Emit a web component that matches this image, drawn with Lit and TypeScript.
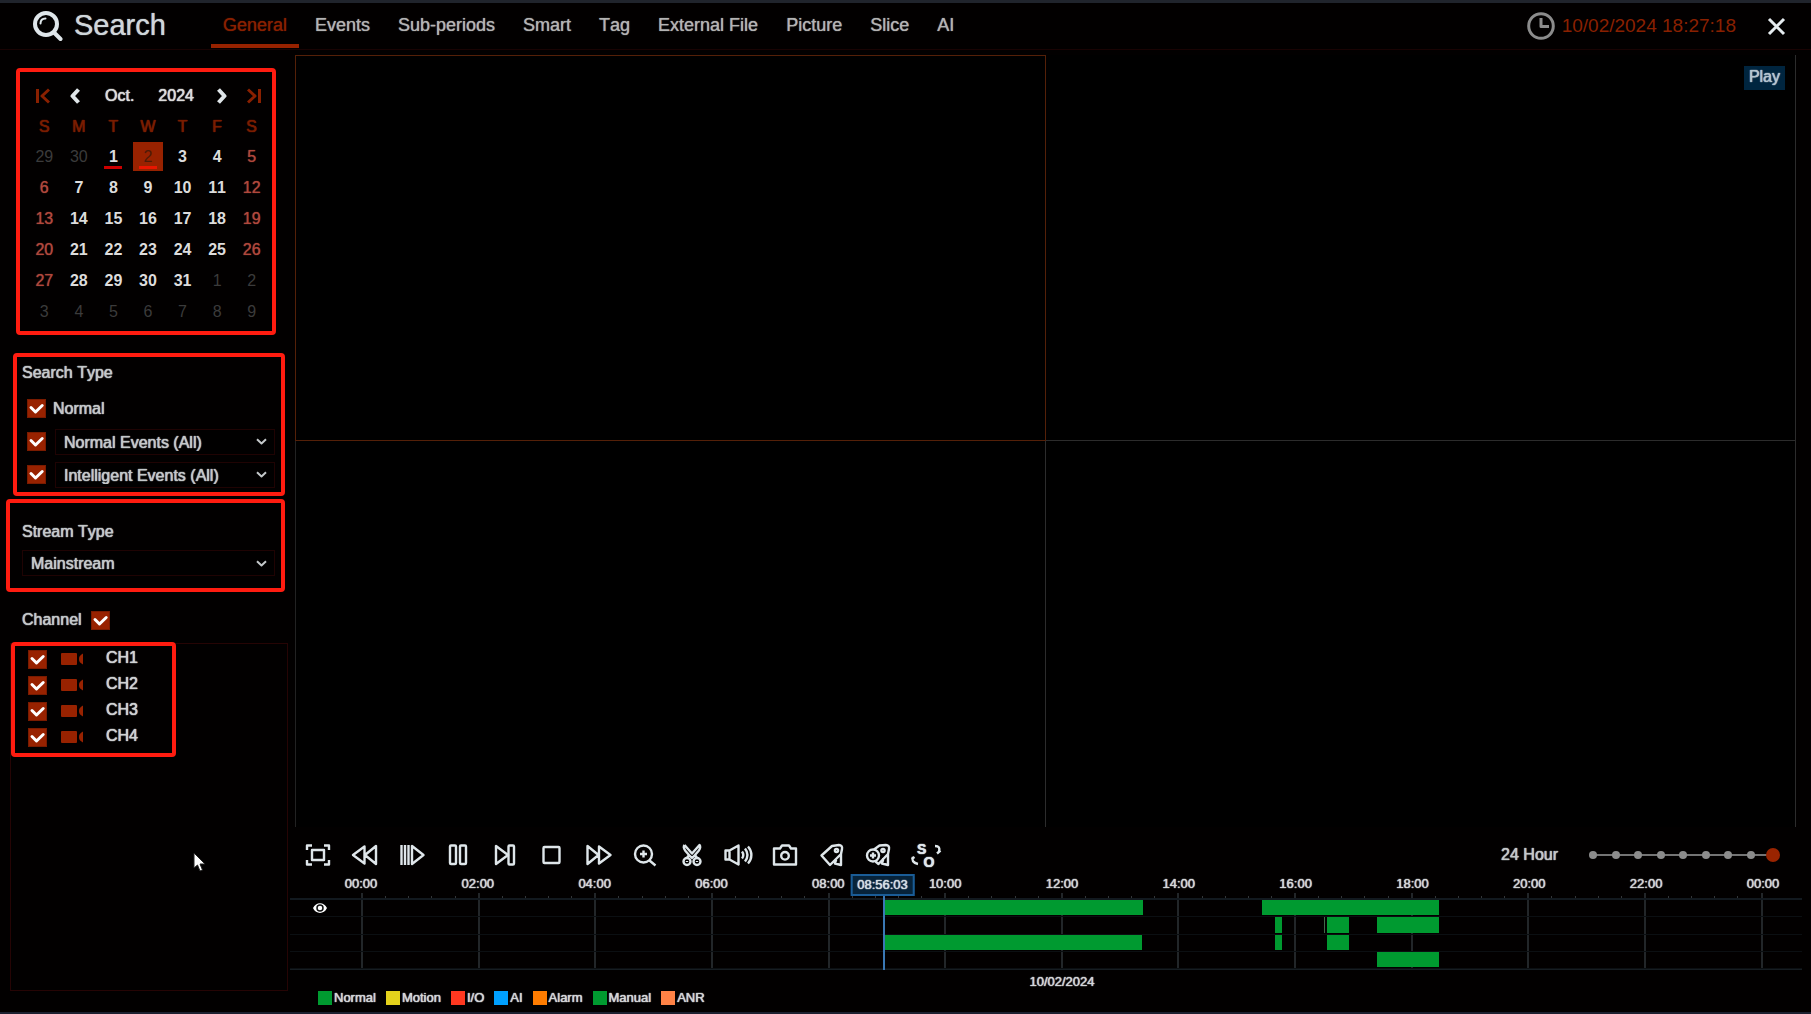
import { LitElement, html, svg, css, type SVGTemplateResult } from "lit";
import { customElement, property, state } from "lit/decorators.js";
import { classMap } from "lit/directives/class-map.js";

const baseStyles = css`
  *, *::before, *::after { box-sizing: border-box; }
  button, select, input { font: inherit; font-kerning: inherit; color: inherit; margin: 0; }
  button {
    background: none; border: 0; padding: 0; text-shadow: inherit;
    display: inline-flex; align-items: center; justify-content: center; cursor: pointer;
  }
  svg { display: block; fill: none; stroke: currentColor; stroke-width: 2; stroke-linejoin: round; }
`;

const frameStyles = css`
  .frame { border: 4px solid #ff1c10; border-radius: 4px; }
`;

@customElement("check-box")
export class CheckBox extends LitElement {
  @property() label = "";
  @property({ type: Boolean }) checked = true;

  static styles = [baseStyles, css`
    :host { display: inline-flex; }
    .box { display: grid; }
    .input, .mark { grid-area: 1 / 1; width: 19px; height: 19px; }
    .input { appearance: none; background: #982200; border: 1px solid #7a1b00; cursor: pointer; }
    .mark { color: #fff; stroke-width: 3; pointer-events: none; stroke-linecap: round; }
    .input:not(:checked) + .mark { display: none; }
  `];

  render() {
    return html`
      <span class="box">
        <input class="input" type="checkbox" aria-label=${this.label} .checked=${this.checked} />
        <svg class="mark" viewBox="0 0 19 19"><path d="M4 8.500 8.500 13 15.200 6.500" /></svg>
      </span>`;
  }
}

@customElement("drop-down")
export class DropDown extends LitElement {
  @property() label = "";
  @property() value = "";

  static styles = [baseStyles, css`
    :host { display: block; flex: 1; }
    .wrap { display: grid; grid-template-columns: 1fr 11px 8px; align-items: center; }
    .select {
      grid-area: 1 / 1 / 2 / 4; appearance: none; width: 100%; height: 26px; padding: 1px 8px 0;
      background: #010000; border: 1px solid #1f0303; color: #c4c8ca; text-shadow: inherit;
    }
    .arrow { grid-area: 1 / 2; width: 11px; height: 7px; pointer-events: none; color: #c4c8ca; }
  `];

  render() {
    return html`
      <div class="wrap">
        <select class="select" aria-label=${this.label}><option>${this.value}</option></select>
        <svg class="arrow" viewBox="0 0 11 7"><path d="M1 1.200 5.500 5.400 10 1.200" /></svg>
      </div>`;
  }
}

@customElement("date-picker")
export class DatePicker extends LitElement {
  @state() private selected = 2;

  static styles = [baseStyles, frameStyles, css`
    :host { display: block; }
    .calendar { padding: 6px 3px 4px 7px; }
    .head { display: flex; align-items: center; gap: 20px; height: 35px; padding-left: 9px; }
    .period { display: flex; gap: 24px; margin: 0 3px 0 5px; }
    .jump { color: #8a2000; stroke-width: 3; }
    .jump svg { stroke-width: 3; }
    .step { color: #dfe5e8; }
    .step svg { stroke-width: 4; }
    .grid { width: 100%; table-layout: fixed; border-collapse: collapse; }
    .weekday { height: 28px; padding: 0; font-weight: 400; color: #7a1d00; }
    .cell { height: 31px; padding: 0; text-align: center; }
    .day { width: 30px; height: 29px; position: relative; vertical-align: middle; font-weight: 700; text-shadow: none; }
    .outside { color: #3b3b3b; font-weight: 400; }
    .weekend { color: #b0483c; font-weight: 400; text-shadow: 0 0 1px currentColor; }
    .selected { background: #982200; color: #4d1a08; font-weight: 400; }
    .marked::after {
      content: ""; position: absolute; left: 6px; right: 6px; bottom: 2px; height: 3px; background: #cc0000;
    }
    .selected::after { background: #e81600; }
  `];

  private renderDay(index: number) {
    const value = index - 1;
    const outside = value < 1 || value > 31;
    const shown = value < 1 ? 30 + value : value > 31 ? value - 31 : value;
    const column = index % 7;
    const classes = {
      day: true,
      outside,
      weekend: !outside && (column === 0 || column === 6),
      selected: value === this.selected,
      marked: value === 1 || value === 2,
    };
    return html`<td class="cell">
      <button class=${classMap(classes)} @click=${() => { if (!outside) this.selected = value; }}>${shown}</button>
    </td>`;
  }

  render() {
    return html`
      <section class="frame calendar">
        <div class="head">
          <button class="jump" aria-label="First"><svg width="14" height="16" viewBox="0 0 14 16"><path d="M1.500 1v14M13 1.500 6 8l7 6.500" /></svg></button>
          <button class="step" aria-label="Previous month"><svg width="10" height="16" viewBox="0 0 10 16"><path d="M8.500 1.500 2.500 8l6 6.500" /></svg></button>
          <div class="period"><span>Oct.</span><span>2024</span></div>
          <button class="step" aria-label="Next month"><svg width="10" height="16" viewBox="0 0 10 16"><path d="M1.500 1.500 7.500 8l-6 6.500" /></svg></button>
          <button class="jump" aria-label="Last"><svg width="14" height="16" viewBox="0 0 14 16"><path d="M12.500 1v14M1 1.500 8 8l-7 6.500" /></svg></button>
        </div>
        <table class="grid">
          <thead><tr>${["S", "M", "T", "W", "T", "F", "S"].map((d) => html`<th class="weekday">${d}</th>`)}</tr></thead>
          <tbody>
            ${[0, 1, 2, 3, 4, 5].map((week) => html`<tr>${[0, 1, 2, 3, 4, 5, 6].map((d) => this.renderDay(week * 7 + d))}</tr>`)}
          </tbody>
        </table>
      </section>`;
  }
}

@customElement("search-sidebar")
export class SearchSidebar extends LitElement {
  static styles = [baseStyles, frameStyles, css`
    :host { display: flex; flex-direction: column; padding: 18px 0 21px; color: #c4c8ca; }
    .picker { width: 260px; margin-left: 16px; color: #dcdcdc; }
    .search { width: 272px; margin: 18px 0 0 13px; padding: 6px 6px 1px 5px; }
    .stream { width: 279px; margin: 3px 0 0 6px; padding: 19px 6px 12px 12px; }
    .title { font: inherit; font-kerning: inherit; margin: 0; line-height: 20px; }
    .row { display: flex; align-items: center; gap: 9px; height: 33px; padding-left: 5px; }
    .plain { gap: 7px; height: 31px; margin: 10px 0 1px; line-height: 16px; }
    .stream .title { margin-bottom: 8px; }
    .channel { display: flex; align-items: center; gap: 9px; height: 20px; margin: 18px 0 13px 22px; }
    .list { flex: 1; width: 278px; margin-left: 10px; border: 1px solid #260404; }
    .channels { width: 165px; margin: -2px 0 0; padding: 0 0 3px 13px; list-style: none; }
    .item { display: flex; align-items: center; height: 26px; }
    .camera { margin-left: 14px; fill: #982200; stroke: none; }
    .name { margin-left: 23px; line-height: 20px; margin-bottom: 3px; color: #d0d2d4; }
  `];

  render() {
    return html`
      <date-picker class="picker"></date-picker>
      <section class="frame search">
        <h2 class="title">Search Type</h2>
        <div class="row plain"><check-box label="Normal"></check-box><span>Normal</span></div>
        <div class="row"><check-box label="Normal Events"></check-box><drop-down label="Normal Events" value="Normal Events (All)"></drop-down></div>
        <div class="row"><check-box label="Intelligent Events"></check-box><drop-down label="Intelligent Events" value="Intelligent Events (All)"></drop-down></div>
      </section>
      <section class="frame stream">
        <h2 class="title">Stream Type</h2>
        <drop-down label="Stream Type" value="Mainstream"></drop-down>
      </section>
      <div class="channel"><h2 class="title">Channel</h2><check-box label="All channels"></check-box></div>
      <div class="list">
        <ul class="frame channels">
          ${["CH1", "CH2", "CH3", "CH4"].map((name) => html`
            <li class="item">
              <check-box label=${name}></check-box>
              <svg class="camera" width="22" height="14" viewBox="0 0 22 14"><rect y="1" width="16" height="12" rx="1" /><path d="M22 1.500v11C19 11 18 9.500 18 7s1-4 4-5.500z" /></svg>
              <span class="name">${name}</span>
            </li>`)}
        </ul>
      </div>`;
  }
}

const controls: { label: string; icon: SVGTemplateResult }[] = [
  { label: "Full screen", icon: svg`<path d="M4 9V4.500h5M21 4.500h5V9M26 19v4.500h-5M9 23.500H4V19"/><rect x="9" y="9" width="12" height="10"/>` },
  { label: "Rewind", icon: svg`<path d="M14.500 5.500 3 14l11.500 8.500zM26 5v18L15 14z"/>` },
  { label: "Slow play", icon: svg`<path d="M4.500 4v20M8 4v20M11.500 4v20"/><path d="M15 5v18l11.500-9z"/>` },
  { label: "Pause", icon: svg`<rect x="7" y="4.500" width="6" height="18.500" rx="1"/><rect x="17" y="4.500" width="6" height="18.500" rx="1"/>` },
  { label: "Next frame", icon: svg`<path d="M6 5v18l12-9z"/><rect x="18.500" y="4.500" width="5.500" height="19" rx="1"/>` },
  { label: "Stop", icon: svg`<rect x="6.500" y="6" width="16" height="16" rx="1"/>` },
  { label: "Fast forward", icon: svg`<path d="M3.500 5v18l11-9zM15 5.500 26.500 14 15 22.500z"/>` },
  { label: "Zoom in", icon: svg`<circle cx="13.500" cy="13" r="8.500"/><path d="m19.500 19.500 6 5M13.500 9.500v7M10 13h7"/>` },
  { label: "Clip", icon: svg`<path d="M7.500 4c-1.500 2-.5 4 1 6l3.500 4-2 3M7.500 4l7.500 8.500L22.500 4c1.500 2 .5 4-1 6L18 14l2 3M12 14l3 3 3-3"/><circle cx="10" cy="20.500" r="3.500"/><circle cx="20" cy="20.500" r="3.500"/><path d="M10 20v1M20 20v1"/>` },
  { label: "Volume", icon: svg`<path d="M5.500 9.500H1.500v9h4M5.500 9.500v9l9 5V4.500zM18 10.500c1.500 2 1.500 5 0 7M21 7.500c3 4 3 9 0 13M24 5.500c4.500 5 4.500 12 0 17"/>` },
  { label: "Snapshot", icon: svg`<path d="M4 7.500h6l2-3h7l2 3h5v16H4z"/><circle cx="15" cy="14.800" r="3.800"/>` },
  { label: "Tag", icon: svg`<path d="M4.500 14.500 15 5l7-1c2 0 3.500 1.500 3 4l-1 5L13 24zM19.500 17.500l-1.500 5 6 1.500v-11"/><circle cx="19.500" cy="9.500" r="1.600"/>` },
  { label: "Add tag", icon: svg`<circle cx="9" cy="14.500" r="6"/><path d="M9 11.500v6M6 14.500h6M10 8.500 15.500 4.500 22 4c2 0 3.500 1.500 3 4l-1 5-9.500 10-3-2.500M19.500 17.500l-1.500 5 6 1.500v-11"/><circle cx="19" cy="9.500" r="1.600"/>` },
  { label: "Synchronise", icon: svg`<g class="letters"><text x="6" y="13">S</text><text x="12.500" y="26">O</text></g><path d="M24 5c4 0 5 2 4 5.500M29.500 9.500l-3.500 3M2 16c-1.500 3 0 6 5 7M.5 18l3-2" />` },
];

interface Clip { start: number; end: number; faint?: boolean; }

const tracks: Clip[][] = [
  [{ start: 8.934, end: 13.38 }, { start: 15.41, end: 18.45 }],
  [{ start: 15.64, end: 15.76 }, { start: 16.48, end: 16.5, faint: true }, { start: 16.53, end: 16.91 }, { start: 17.39, end: 18.45 }],
  [{ start: 8.934, end: 13.36 }, { start: 15.64, end: 15.76 }, { start: 16.53, end: 16.91 }],
  [{ start: 17.39, end: 18.45 }],
];

const legend = [
  ["Normal", "#009a30"], ["Motion", "#e4d11c"], ["I/O", "#ff3820"], ["AI", "#00a0ff"],
  ["Alarm", "#ff7c00"], ["Manual", "#009a30"], ["ANR", "#ff8246"],
];

const percent = (hour: number) => (hour / 24) * 100;

@customElement("time-line")
export class TimeLine extends LitElement {
  @property({ type: Number }) position = 8.934;

  static styles = [baseStyles, css`
    :host { display: block; font-size: 13px; line-height: 16px; color: #d4d6d8; }
    .chart { position: relative; margin-right: 9px; }
    .labels, .ticks { display: flex; justify-content: space-between; margin: 0 39px 0 71px; }
    .labels { height: 17px; }
    .label { width: 0; display: flex; justify-content: center; }
    .ticks { height: 77px; }
    .tick { width: 1px; height: 3px; margin-top: 3px; background: #33373a; }
    .major { width: 2px; height: 77px; margin: 0; background: #222629; }
    .tracks { position: absolute; inset: 22px 0 0; border-top: 2px solid #12191f; border-bottom: 1px solid #161d22; display: grid; grid-template-rows: repeat(4, 1fr); }
    .track { padding-right: 39px; border-bottom: 1px solid #0b0f12; display: grid; grid-template-columns: 72px 1fr; }
    .eye { align-self: center; justify-self: start; margin-left: 22px; color: #fff; }
    .lane { position: relative; grid-column: 2; }
    .clip { position: absolute; top: 0; bottom: 1px; background: #009a30; }
    .faint { background: #3f6b4a; }
    .playhead { position: absolute; inset: 0 40px 0 71px; pointer-events: none; }
    .line { position: absolute; top: 19px; bottom: 0; width: 2px; background: #3a78b4; }
    .time {
      position: absolute; top: -2px; transform: translateX(-50%); height: 22px; padding: 1px 5px;
      background: #07233a; border: 2px solid #1a5c96; color: #d4dde4;
    }
    .date { text-align: center; margin: 4px 48px 0 71px; }
    .legend { display: flex; gap: 10px; margin: 0 0 6px 28px; padding: 0; list-style: none; }
    .entry { display: flex; align-items: center; gap: 2px; }
    .swatch { width: 14px; height: 14px; }
  `];

  render() {
    const left = `left:${percent(this.position)}%`;
    return html`
      <div class="chart">
        <div class="labels">
          ${Array.from({ length: 13 }, (_, i) => html`<span class="label">${String((i * 2) % 24).padStart(2, "0")}:00</span>`)}
        </div>
        <div class="ticks">
          ${Array.from({ length: 61 }, (_, i) => html`<i class=${classMap({ tick: true, major: i % 5 === 0 })}></i>`)}
        </div>
        <div class="tracks">
          ${tracks.map((clips, i) => html`
            <div class="track">
              ${i === 0 ? html`<button class="eye" aria-label="Show track"><svg width="16" height="12" viewBox="0 0 16 12"><path d="M1 6c3-6.500 11-6.500 14 0-3 6.500-11 6.500-14 0z" fill="#fff" stroke="none"/><circle cx="8" cy="6" r="3" stroke="#111" stroke-width="1.500"/></svg></button>` : ""}
              <div class="lane">
                ${clips.map((c) => html`<span class=${classMap({ clip: true, faint: !!c.faint })} style="left:${percent(c.start)}%;width:${percent(c.end - c.start)}%"></span>`)}
              </div>
            </div>`)}
        </div>
        <div class="playhead"><span class="line" style=${left}></span><span class="time" style=${left}>08:56:03</span></div>
      </div>
      <div class="date">10/02/2024</div>
      <ul class="legend">
        ${legend.map(([name, color]) => html`<li class="entry"><span class="swatch" style="background:${color}"></span>${name}</li>`)}
      </ul>`;
  }
}

@customElement("app-root")
export class AppRoot extends LitElement {
  @state() private tab = "General";

  static styles = [baseStyles, css`
    :host {
      display: flex; flex-direction: column; height: 100vh; overflow: hidden; background: #020000;
      border-top: 3px solid #20242c; border-bottom: 2px solid #1c2130;
      font-family: "Liberation Sans", Arial, sans-serif; font-size: 16px; font-kerning: none; color: #c4c8ca;
      text-shadow: 0 0 1px currentColor, 0 0 1px currentColor;
      box-sizing: border-box;
    }
    .header { display: flex; align-items: center; height: 47px; padding: 0 25px 0 32px; border-bottom: 1px solid #190303; text-shadow: none; }
    .logo { color: #dfe6ea; margin-right: 11px; }
    .brand { margin: 0; font-size: 29px; line-height: 40px; font-weight: 400; color: #cfd6da; padding-bottom: 2px; text-shadow: 0 0 1px currentColor; }
    .tabs { display: flex; align-self: stretch; margin: 0 0 1px 45px; gap: 4px; }
    .tab { font-size: 18px; padding: 4px 12px 0; color: #b4b4b4; border-bottom: 4px solid transparent; text-shadow: 0 0 1px currentColor; }
    .active { color: #8a2000; border-bottom-color: #982200; }
    .clock { margin-left: auto; display: flex; align-items: center; gap: 7px; font-size: 19px; color: #8a2000; }
    .dial { color: #8c8c8c; stroke-width: 3; }
    .close { margin-left: 31px; color: #e6ecef; }
    .close svg { stroke-width: 3; }
    .body { flex: 1; display: grid; grid-template-columns: 290px 1fr; min-height: 0; }
    .main { display: flex; flex-direction: column; min-width: 0; }
    .videos { flex: 1; display: grid; grid-template: 1fr 1fr / 1fr 1fr; margin: 5px 15px 0 5px; background: #000; min-height: 0; }
    .pane { border-right: 1px solid #2c2c2c; }
    .top-right { border-bottom: 1px solid #2c2c2c; }
    .bottom-left { border-left: 1px solid #222; }
    .chosen { border: 1px solid #542008; }
    .badge-row { display: flex; justify-content: flex-end; padding: 11px 10px 0 0; }
    .play { background: #00253f; color: #b4c4d0; height: 24px; padding: 0 5px 2px; }
    .controls { display: flex; align-items: center; justify-content: space-between; height: 49px; padding: 7px 31px 0 5px; color: #dfe6ea; }
    .buttons { display: grid; grid-template-columns: repeat(14, 1fr); width: 654px; }
    .icon { stroke-width: 2.4; overflow: visible; }
    .letters { font-size: 14px; font-weight: 700; fill: currentColor; stroke: none; }
    .scale { display: flex; align-items: center; gap: 28px; color: #c4c8ca; }
    .slider { display: grid; align-items: center; width: 194px; }
    .dots, .range { grid-area: 1 / 1; }
    .dots { display: flex; align-items: center; justify-content: space-between; padding: 0 3px; background: linear-gradient(#747474, #747474) center / calc(100% - 14px) 2px no-repeat; }
    .dot { width: 8px; height: 8px; border-radius: 50%; background: #8c8c8c; }
    .range { appearance: none; width: 100%; height: 14px; background: none; }
    .range::-webkit-slider-thumb { appearance: none; width: 14px; height: 14px; border-radius: 50%; background: #9a2400; }
    .pointer { position: absolute; left: 193px; top: 852px; fill: #fff; stroke: #222; stroke-width: 1; pointer-events: none; }
  `];

  render() {
    const tabs = ["General", "Events", "Sub-periods", "Smart", "Tag", "External File", "Picture", "Slice", "AI"];
    return html`
      <header class="header">
        <svg class="logo" width="31" height="31" viewBox="0 0 31 31"><circle cx="14" cy="13" r="11" stroke-width="4"/><path d="m22 21.500 6.500 6.500" stroke-width="4" stroke-linecap="round"/><path d="M8.500 12.500c0-3 2-5 5-5" stroke-width="2" stroke-linecap="round"/></svg>
        <h1 class="brand">Search</h1>
        <nav class="tabs">
          ${tabs.map((t) => html`<button class=${classMap({ tab: true, active: t === this.tab })} @click=${() => (this.tab = t)}>${t}</button>`)}
        </nav>
        <div class="clock">
          <svg class="dial" width="28" height="28" viewBox="0 0 28 28"><circle cx="14" cy="14" r="12.300"/><path d="M14 6v8.500h8"/></svg>
          <time>10/02/2024 18:27:18</time>
        </div>
        <button class="close" aria-label="Close"><svg width="19" height="19" viewBox="0 0 19 19"><path d="m2 2 15 15M17 2 2 17"/></svg></button>
      </header>
      <div class="body">
        <search-sidebar></search-sidebar>
        <main class="main">
          <section class="videos">
            <div class="pane chosen"></div>
            <div class="pane top-right"><div class="badge-row"><button class="play">Play</button></div></div>
            <div class="pane bottom-left"></div>
            <div class="pane"></div>
          </section>
          <div class="controls">
            <div class="buttons">
              ${controls.map((c) => html`<button aria-label=${c.label}><svg class="icon" width="30" height="28" viewBox="0 0 30 28">${c.icon}</svg></button>`)}
            </div>
            <label class="scale">24 Hour
              <span class="slider">
                <span class="dots">${Array.from({ length: 9 }, () => html`<i class="dot"></i>`)}</span>
                <input class="range" type="range" min="0" max="8" value="8" />
              </span>
            </label>
          </div>
          <time-line></time-line>
        </main>
      </div>
      <svg class="pointer" width="13" height="20" viewBox="0 0 13 20"><path d="M1 1v15l3.500-3 2.500 6 2.500-1-2.500-6H12z"/></svg>`;
  }
}
